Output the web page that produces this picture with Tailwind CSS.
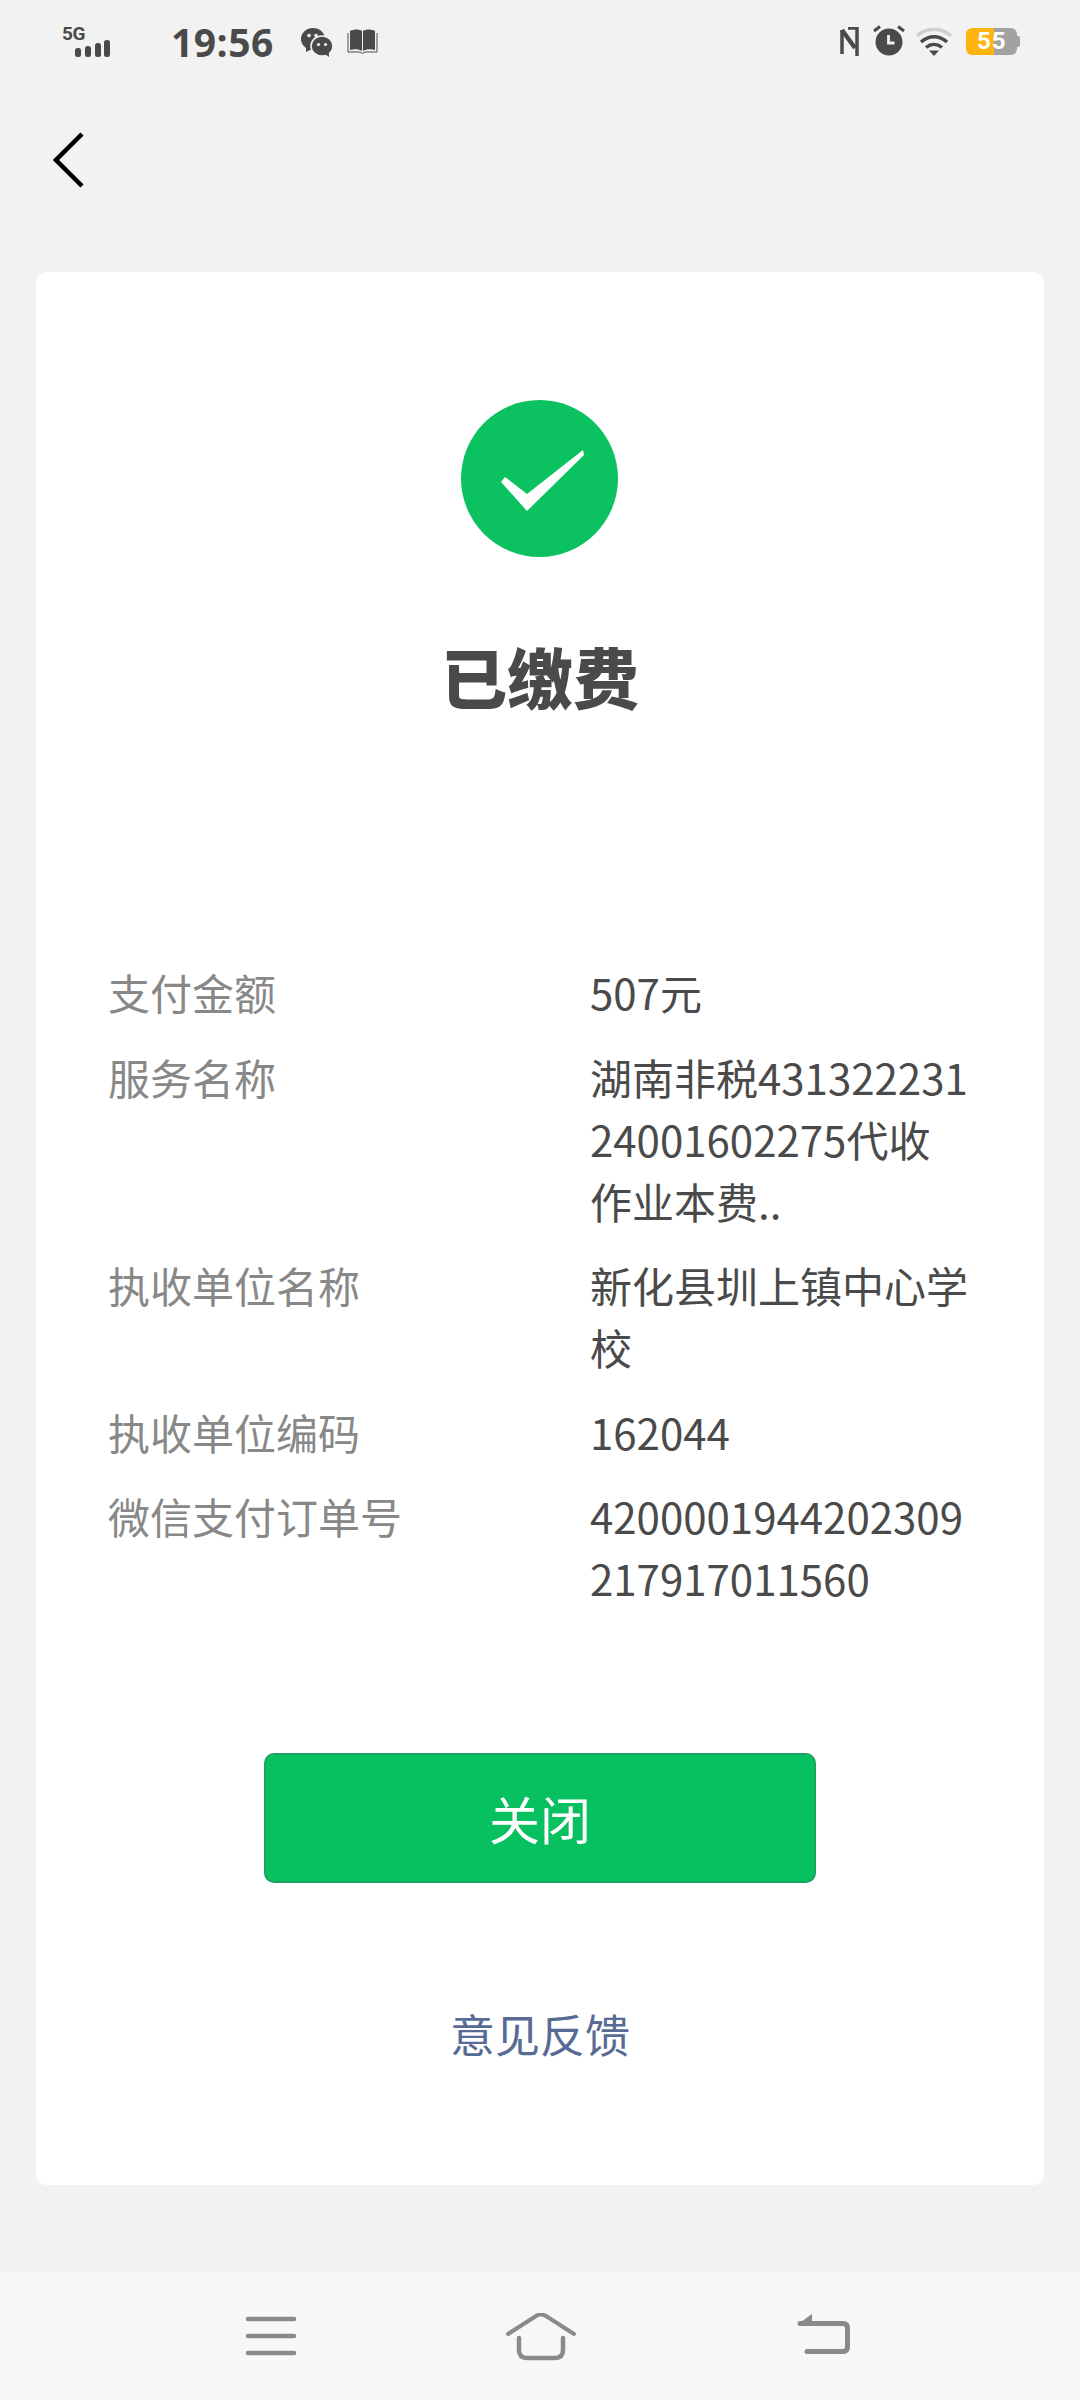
<!DOCTYPE html>
<html lang="zh">
<head>
  <meta charset="UTF-8" />
  <meta name="viewport" content="width=device-width, initial-scale=1.0"/>
  <title>已缴费</title>
  <script src="https://cdn.jsdelivr.net/npm/@tailwindcss/browser@4"></script>
</head>
<body class="bg-[#f2f2f2] w-[1080px] h-[2400px] overflow-hidden font-['Noto_Sans_CJK_SC','Noto_Sans',sans-serif]">
  <!-- status bar -->
  <div class="h-[80px] flex items-start pt-[25px] pl-[62px] pr-[59px] text-[#4a4a4a]">
    <div class="w-[50px] h-[32px] relative">
      <span class="absolute left-0 top-[-1px] text-[19px] leading-[19px] font-bold font-['Roboto',sans-serif] tracking-[-0.5px]">5G</span>
      <svg class="absolute left-[13px] top-[15px]" width="36" height="17" viewBox="0 0 36 17" fill="#4a4a4a">
        <rect x="0" y="8" width="6" height="9" rx="2.5"/><rect x="10" y="6" width="6" height="11" rx="2.5"/><rect x="20" y="3" width="6" height="14" rx="2.5"/><rect x="29" y="0" width="6" height="17" rx="2.5"/>
      </svg>
    </div>
    <span class="ml-[59px] mt-[-3px] text-[39px] leading-[40px] font-bold font-['Open_Sans',sans-serif] tracking-[0.5px]">19:56</span>
    <svg class="ml-[27px] mt-[2px]" width="32" height="31" viewBox="0 0 32 31">
      <ellipse cx="12" cy="12" rx="12" ry="11" fill="#4a4a4a"/>
      <path d="M5 19l0 6 6-3z" fill="#4a4a4a"/>
      <circle cx="8" cy="8.5" r="1.8" fill="#f2f2f2"/><circle cx="15" cy="8.5" r="1.8" fill="#f2f2f2"/>
      <ellipse cx="21" cy="19" rx="11" ry="10" fill="#4a4a4a" stroke="#f2f2f2" stroke-width="1.5"/>
      <path d="M24 27l4 3 0-5z" fill="#4a4a4a"/>
      <circle cx="17.5" cy="17.5" r="1.6" fill="#f2f2f2"/><circle cx="24.5" cy="17.5" r="1.6" fill="#f2f2f2"/>
    </svg>
    <svg class="ml-[14px] mt-[4px]" width="31" height="26" viewBox="0 0 31 26">
      <path d="M3 2c4-2 9-2 12 0v20c-3-2-8-2-12-1zM28 2c-4-2-9-2-12 0v20c3-2 8-2 12-1z" fill="#4a4a4a"/>
      <path d="M1 4v19h12l2.500 1.500 2.500-1.500h12V4" fill="none" stroke="#4a4a4a" stroke-width="1"/>
    </svg>
    <div class="ml-auto flex items-start">
      <svg class="mt-[2px]" width="19" height="30" viewBox="0 0 19 30" fill="none" stroke="#4a4a4a">
        <path d="M2 3v24" stroke-width="3.500"/>
        <path d="M2 3l13 18" stroke-width="4.500"/>
        <path d="M8 1h9v28" stroke-width="3.500"/>
      </svg>
      <svg class="ml-[14px]" width="32" height="31" viewBox="0 0 32 31">
        <circle cx="16" cy="17" r="13.500" fill="#4a4a4a"/>
        <path d="M1 6l6-4.500M31 6l-6-4.500" stroke="#4a4a4a" stroke-width="3" fill="none"/>
        <path d="M15.500 10v8h6" stroke="#f2f2f2" stroke-width="2.800" fill="none"/>
      </svg>
      <svg class="ml-[11px] mt-[3px]" width="36" height="28" viewBox="0 0 36 28" fill="none">
        <path d="M1 8C11 -1 25 -1 35 8" stroke="#cfcfcf" stroke-width="3.500"/>
        <path d="M5 14C13 7 23 7 31 14" stroke="#4a4a4a" stroke-width="3.500"/>
        <path d="M10 19.500C15 15.500 21 15.500 26 19.500" stroke="#4a4a4a" stroke-width="3.500"/>
        <path d="M13 22.500h10L18 28z" fill="#4a4a4a"/>
      </svg>
      <div class="ml-[14px] mt-[3px] relative flex items-center w-[55px] h-[27px]">
        <div class="w-[51px] h-[27px] rounded-[6px] overflow-hidden flex">
          <div class="w-[28px] bg-[#ffb30f]"></div>
          <div class="flex-1 bg-[#a2a2a2]"></div>
        </div>
        <div class="w-[3px] h-[11px] bg-[#a2a2a2] rounded-r-[2px]"></div>
        <span class="absolute left-[11px] top-0 text-[24px] leading-[27px] font-bold text-white font-['Roboto',sans-serif] tracking-[1px]">55</span>
      </div>
    </div>
  </div>

  <!-- back -->
  <div class="h-[192px] pl-[53px] pt-[52px]">
    <svg width="32" height="56" viewBox="0 0 32 56" fill="none">
      <path d="M29 2L3 28l26 26" stroke="#000" stroke-width="4.500"/>
    </svg>
  </div>

  <!-- card -->
  <div class="ml-[36px] w-[1008px] h-[1913px] bg-white rounded-[10px] flex flex-col items-center pt-[128px]">
    <svg class="ml-[-1px]" width="157" height="157" viewBox="0 0 157 157">
      <circle cx="78.500" cy="78.500" r="78.500" fill="#0bc160"/>
      <path d="M40 82L44 77L66 94L122 50L123 55L66 111Z" fill="#fff"/>
    </svg>
    <h1 class="mt-[78px] text-[66px] leading-[80px] font-black text-[#4a4a4a]">已缴费</h1>

    <div class="mt-[246px] w-full pl-[72px] flex flex-col gap-[22.5px] text-[42px] leading-[62px]">
      <div class="flex"><div class="w-[482px] shrink-0 text-[#888888]">支付金额</div><div class="w-[382px] break-all text-[#4a4a4a]">507元</div></div>
      <div class="flex"><div class="w-[482px] shrink-0 text-[#888888]">服务名称</div><div class="w-[382px] break-all text-[#4a4a4a]">湖南非税43132223124001602275代收作业本费..</div></div>
      <div class="flex"><div class="w-[482px] shrink-0 text-[#888888]">执收单位名称</div><div class="w-[382px] break-all text-[#4a4a4a]">新化县圳上镇中心学校</div></div>
      <div class="flex"><div class="w-[482px] shrink-0 text-[#888888]">执收单位编码</div><div class="w-[382px] break-all text-[#4a4a4a]">162044</div></div>
      <div class="flex"><div class="w-[482px] shrink-0 text-[#888888]">微信支付订单号</div><div class="w-[382px] break-all text-[#4a4a4a]">4200001944202309217917011560</div></div>
    </div>

    <button class="mt-[144px] w-[552px] h-[130px] bg-[#07c160] border-2 border-[#1aa45f] rounded-[10px] text-white text-[51px] leading-[62px]">关闭</button>
    <div class="mt-[120px] text-[45px] leading-[62px] text-[#576b95]">意见反馈</div>
  </div>

  <!-- navigation bar -->
  <div class="mt-[88px] h-[127px] bg-[#f7f7f7] relative">
    <svg class="absolute left-[245px] top-[40px]" width="52" height="46" viewBox="0 0 52 46" stroke="#8a8a8a" stroke-width="4.500" stroke-linecap="round" fill="none">
      <path d="M3 6h46M3 23h46M3 40h46"/>
    </svg>
    <svg class="absolute left-[505px] top-[40px]" width="72" height="48" viewBox="0 0 72 48" stroke="#8a8a8a" stroke-width="4" stroke-linecap="round" fill="none">
      <path d="M3 21L31 3q5-3 10 0l28 18"/>
      <path d="M14 25v12q0 8 8 8h28q8 0 8-8V25" stroke-width="4.500"/>
    </svg>
    <svg class="absolute left-[797px] top-[40px]" width="54" height="46" viewBox="0 0 54 46" fill="none">
      <path d="M2 10.500L15 1v10z" fill="#8a8a8a"/>
      <path d="M3 10.500h43q4.500 0 4.500 4.500v19q0 4.500-4.500 4.500H10" stroke="#8a8a8a" stroke-width="5" stroke-linecap="round"/>
    </svg>
  </div>
</body>
</html>
